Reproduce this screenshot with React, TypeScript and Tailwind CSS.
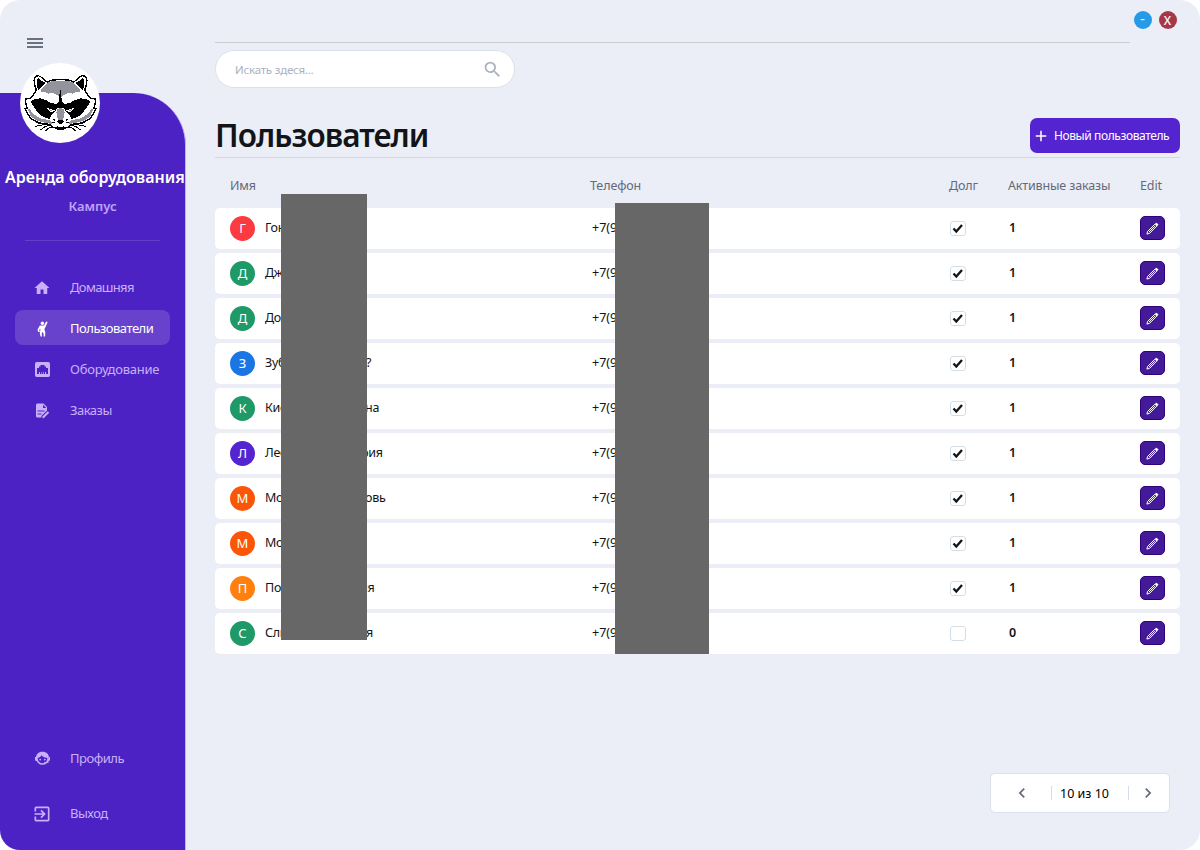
import React from "react";
import { MdHome, MdExitToApp, MdSearch, MdChevronLeft, MdChevronRight, MdAdd } from "react-icons/md";

const half = (
  <>
    <path fill="#fff" stroke="#000" strokeWidth="4" d="M138 65L112 66 96 72 82 59 70 53 61 55 57 67 60 84 64 96 54 112 46 121 31 123 33 138 37 152 30 152 38 168 48 182 64 191 82 197 104 200 114 208 138 215" />
    <path fill="#000" d="M92 75L80 69 70 60 66 64 65 78 69 97 78 88z" />
    <path fill="#93939b" d="M138 68L113 69 98 74 86 86 79 95 76 103 90 102 101 107 114 104 126 111 138 119z" />
    <path fill="#93939b" d="M37 152L50 156 62 171 82 183 103 186 111 193 110 198 84 193 63 187 48 176z" />
    <path fill="#fff" d="M33 125L44 127 50 148 66 170 88 181 78 182 56 169 42 152z" />
    <path fill="#000" d="M47 131L58 123 76 121 92 126 107 134 125 139 138 140 138 151 127 151 121 159 115 166 107 172 106 183 92 180 78 172 64 157 54 142z" />
    <path fill="#fff" d="M94 149L107 153 120 157 113 162 103 160z" />
    <path fill="#93939b" d="M100 153L110 157 112 160 104 158z" />
    <path fill="#93939b" d="M138 149L127 153 124 164 129 188 138 188z" />
    <path fill="#fff" d="M123 162L114 170 108 180 108 190 113 201 123 208 138 204 138 194 127 190z" />
    <path fill="#000" d="M138 187L128 187 127 192 134 198 138 198zM138 207L125 205 120 211 127 215 138 217z" />
    <path fill="none" stroke="#000" strokeWidth="3" d="M113 184L121 187M112 192L120 194M100 197L84 200 59 206M106 200L90 206 76 216M113 206L100 211 91 219M76 196L64 194" />
  </>
);

function Raccoon() {
  return (
    <svg viewBox="15 15 240 240" className="size-20" shapeRendering="crispEdges">
      {half}
      <g transform="translate(273 0) scale(-1 1)">{half}</g>
      <path fill="#000" d="M136 93l-3 17-1 20-7 8 11 4 11-4-7-8-1-20z" />
      <path fill="#fff" d="M134 199h4v5h-4z" />
    </svg>
  );
}

const HumanIcon = () => (
  <svg viewBox="0 0 15 16" className="h-4 w-[15px]" fill="currentColor">
    <circle cx="7.400" cy="2.300" r="1.700" />
    <path d="M4.800 4.500h4.300l2-3.900 1.600.5-2.400 5.400-.9 1.400.9 3.600-.2 4H8.700l-.2-3.300-1.200-1.200-.6 1.500.3 3H5.600l-.8-3.200.6-3.500L5 7.500 4.300 9l.5 2H3.300l-.8-2.200z" />
  </svg>
);
const PortIcon = () => (
  <svg viewBox="0 0 15 15" className="size-[15px]">
    <path fill="currentColor" fillRule="evenodd" d="M1.700 0h11.600Q15 0 15 1.700v11.600q0 1.700-1.700 1.700H1.700Q0 15 0 13.300V1.700Q0 0 1.700 0zM2 12h2v-2h1v2h1.500v-2h.6v2h.9v-2h.6v2H10v-2h1v2h2V6h-2V4.500H9.500V3h-4v1.500H4V6H2z" />
  </svg>
);
const FileEditIcon = () => (
  <svg viewBox="0 0 15 16" className="h-4 w-[15px]">
    <path fill="currentColor" fillRule="evenodd" d="M2.500.5h6L12 4v3.500L6.400 13v1.500H2.500Q1 14.500 1 13V2Q1 .5 2.500.5zM8 1.700V5h3.300zM2.500 7.500v1h7v-1zm0 3v1h4v-1z" />
    <path stroke="currentColor" strokeWidth="2" d="M7.700 14.800l5.800-5.800" />
  </svg>
);
const FaceIcon = () => (
  <svg viewBox="0 0 15 15" className="size-[15px]">
    <circle cx="7.500" cy="7.500" r="5.600" fill="none" stroke="currentColor" strokeWidth="1.500" />
    <path fill="currentColor" d="M1 7.500C.8 3.500 3.500.8 7.500.8S14.200 3.500 14 7.500C10 6.700 7.500 6 6.500 4.300 5.500 6 4 7 1 7.500zM0 6h2v4H.8L0 9zm15 0h-2v4h1.200l.8-1zM9 12h4.500v-2L12 11.200H9z" />
    <circle cx="5.200" cy="8.600" r=".9" fill="currentColor" />
    <circle cx="9.800" cy="8.600" r=".9" fill="currentColor" />
  </svg>
);
const PencilIcon = () => (
  <svg viewBox="0 0 13 13" className="size-[13px]" fill="none" stroke="#fff">
    <path strokeWidth="1" d="M.9 12.100l.7-2.700L8.900 2.200l1.900 1.900-7.200 7.200zM2.900 10.100l6-6" />
    <path strokeWidth="1.800" d="M9.500 1.300l2.200 2.200" />
    <path strokeWidth="1" d="M10.200.9l1.900 1.900" />
  </svg>
);

const people = [
  { l: "Г", c: "bg-[#fb3a42]", a: "Гон", z: "", on: true },
  { l: "Д", c: "bg-[#1e9967]", a: "Джа", z: "", on: true },
  { l: "Д", c: "bg-[#1e9967]", a: "Дол", z: "", on: true },
  { l: "З", c: "bg-[#1b75e3]", a: "Зуб", z: "?", on: true },
  { l: "К", c: "bg-[#1e9967]", a: "Кис", z: "на", on: true },
  { l: "Л", c: "bg-[#5424d1]", a: "Лео", z: "рия", on: true },
  { l: "М", c: "bg-[#fb5607]", a: "Мо", z: "овь", on: true },
  { l: "М", c: "bg-[#fb5607]", a: "Мо", z: "", on: true },
  { l: "П", c: "bg-[#ff800d]", a: "По", z: "ия", on: true },
  { l: "С", c: "bg-[#1e9967]", a: "Сли", z: "я", on: false },
];

function NavItem({ icon, label, active = false }: { icon: React.ReactNode; label: string; active?: boolean }) {
  return (
    <div className={`ml-[15px] flex h-[35px] w-[155px] items-center rounded-[8px] pl-5 pt-[2px] text-[13px] ${label === "Оборудование" ? "tracking-[-0.25px]" : label === "Домашняя" ? "tracking-[-0.65px]" : "tracking-[-0.5px]"} ${active ? "bg-[#6842cd] text-white" : "text-[#c8b0fb]"}`}>
      <span className="flex w-[15px] shrink-0 justify-center">{icon}</span>
      <span className="ml-5 whitespace-nowrap">{label}</span>
    </div>
  );
}

export default function App() {
  return (
    <div className="relative flex h-[850px] w-[1200px] overflow-hidden rounded-[20px] bg-[#ebeef6] font-['Noto_Sans',sans-serif] text-[13px] text-[#121518]">
      <aside className="flex h-full w-[186px] shrink-0 flex-col">
        <div className="flex h-[93px] shrink-0 flex-col pl-[27px] pt-[38px]">
          <span className="h-[2px] w-4 bg-[#6a7180]" />
          <span className="mt-[2px] h-[2px] w-4 bg-[#6a7180]" />
          <span className="mt-[2px] h-[2px] w-4 bg-[#6a7180]" />
        </div>
        <div className="flex flex-1 flex-col rounded-tr-[52px] border-r border-[#c8b0fb] bg-[#4d22c4]">
          <div className="relative z-10 ml-5 -mt-[30px] size-20 shrink-0 overflow-hidden rounded-full bg-white">
            <Raccoon />
          </div>
          <div className="mt-[22px] h-6 whitespace-nowrap pl-[5px] text-[16px] font-semibold leading-6 tracking-[0.04px] text-white">Аренда оборудования</div>
          <div className="mt-[7px] h-5 text-center text-[13px] font-semibold leading-5 text-[#c0a3fa]">Кампус</div>
          <div className="mx-[25px] mt-6 h-px shrink-0 bg-[#643ecb]" />
          <nav className="mt-[28px] flex flex-col gap-[6px]">
            <NavItem icon={<MdHome className="-ml-px size-[18px] shrink-0" />} label="Домашняя" />
            <NavItem icon={<HumanIcon />} label="Пользователи" active />
            <NavItem icon={<PortIcon />} label="Оборудование" />
            <NavItem icon={<FileEditIcon />} label="Заказы" />
          </nav>
          <div className="mb-5 mt-auto flex flex-col gap-5">
            <NavItem icon={<FaceIcon />} label="Профиль" />
            <NavItem icon={<MdExitToApp className="-ml-px size-5 shrink-0" />} label="Выход" />
          </div>
        </div>
      </aside>

      <main className="ml-[29px] flex w-[965px] flex-col">
        <div className="flex h-[42px] shrink-0 items-start justify-end gap-[7px] pr-[3.500px] pt-[11px]">
          <button className="flex size-[18px] items-center justify-center rounded-full bg-[#259be8] pb-[3px] text-[14px] leading-none text-white">-</button>
          <button className="flex size-[18px] items-center justify-center rounded-full bg-[#a53848] pt-px text-[12px] font-medium leading-none text-white">X</button>
        </div>
        <div className="h-px w-[915px] shrink-0 bg-[#cbcdd2]" />
        <div className="mt-[7px] flex h-[38px] w-[300px] shrink-0 items-center justify-between rounded-full border border-[#dae1ec] bg-white pl-[19px] pr-[11px] text-[11.500px] tracking-[-0.2px] text-[#aab1c0]">
          <span className="pt-px">Искать здеся...</span>
          <MdSearch className="size-[21px]" />
        </div>
        <div className="flex h-[70px] shrink-0 justify-between border-b border-[#d3d7e2] pt-[30px]">
          <h1 className="-mt-[3px] text-[31.500px] font-semibold leading-[40px] tracking-[-0.93px]">Пользователи</h1>
          <button className="flex h-[35px] w-[150px] items-center rounded-[7px] bg-[#5424d1] pl-[2px] text-[12px] tracking-[-0.4px] text-white">
            <MdAdd className="size-[18px] shrink-0" />
            <span className="ml-1 whitespace-nowrap">Новый пользователь</span>
          </button>
        </div>
        <div className="flex h-[50px] shrink-0 items-center pb-px pt-[7px] text-[12.500px] tracking-[-0.1px] text-[#636a79]">
          <span className="w-[359px] pl-[15px]">Имя</span>
          <span className="w-[360px] pl-4">Телефон</span>
          <span className="w-[59px] pl-[15px]">Долг</span>
          <span className="w-[147px] whitespace-nowrap pl-[15px] tracking-[-0.15px]">Активные заказы</span>
          <span>Edit</span>
        </div>
        <div className="flex flex-col gap-1">
          {people.map((p, i) => (
            <div key={i} className="flex h-[41px] items-center rounded-[5px] bg-white pl-[15px]">
              <span className={`flex size-[25px] shrink-0 items-center justify-center rounded-full text-[13px] text-white ${p.c}`}>{p.l}</span>
              <span className="ml-[10px] flex w-[327px] text-[12.500px] tracking-[-0.25px]">
                <span className="w-[101px]">{p.a}</span>
                <span className={p.z === "рия" ? "-ml-[5px]" : p.z === "ия" ? "-ml-[6px]" : p.z.length > 1 ? "-ml-px" : ""}>{p.z}</span>
              </span>
              <span className="w-[358px] text-[12.500px]">+7(9</span>
              <span className="flex h-[15px] w-4 shrink-0 items-center justify-center rounded-[3px] border border-[#d3dfe8]">
                {p.on && (
                  <svg viewBox="0 0 12 10" className="h-[10px] w-3 shrink-0" fill="none" stroke="#121518" strokeWidth="2.300">
                    <path d="M1.500 4.500l2.800 3L10 1" />
                  </svg>
                )}
              </span>
              <span className="ml-[43px] w-[131px] text-[12.500px] font-semibold">{p.on ? 1 : 0}</span>
              <button className="mb-px flex h-6 w-[25px] shrink-0 items-center justify-center rounded-[5px] border border-[#32007c] bg-[#431a97]"><PencilIcon /></button>
            </div>
          ))}
        </div>
        <div className="mb-[37px] mr-[10px] mt-auto flex h-10 w-[180px] shrink-0 items-center self-end rounded-[5px] border border-[#dae1ec] bg-white text-black">
          <MdChevronLeft className="ml-[21px] size-5 text-[#636a79]" />
          <span className="ml-[19px] h-[14px] w-px bg-[#d7dde8]" />
          <span className="w-[76px] pl-2 pt-[2px] text-[12.500px]">10 из 10</span>
          <span className="h-[14px] w-px bg-[#d7dde8]" />
          <MdChevronRight className="ml-[9px] size-5 text-[#636a79]" />
        </div>
      </main>

      <div className="absolute left-[281px] top-[194px] h-[446px] w-[86px] bg-[#676767]" />
      <div className="absolute left-[615px] top-[203px] h-[451px] w-[93.500px] bg-[#676767]" />
    </div>
  );
}
